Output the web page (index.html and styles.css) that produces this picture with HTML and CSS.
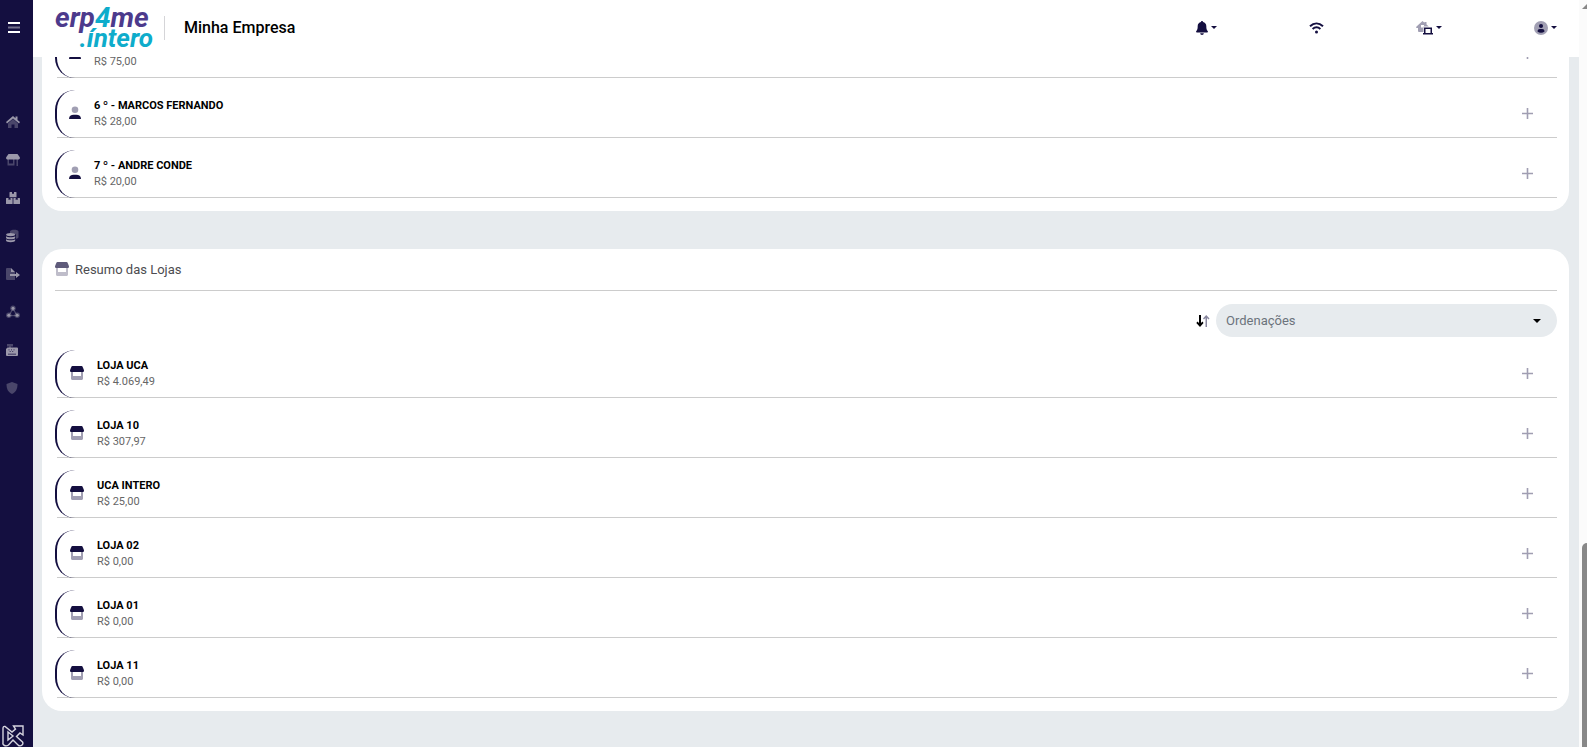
FILE: index.html
```
<!DOCTYPE html>
<html lang="pt-BR">
<head>
<meta charset="utf-8">
<title>Minha Empresa</title>
<link rel="stylesheet" href="styles.css">
</head>
<body>
<svg class="sprite" aria-hidden="true">
  <symbol id="user" viewBox="0 0 12 14"><circle class="soft" cx="6" cy="3.800" r="3.300"/><path d="M0 13c0-3 2-4.300 4.600-4.300h2.800C10 8.700 12 10 12 13z"/></symbol>
  <symbol id="store" viewBox="0 0 14 14"><path class="soft" d="M1 6h2v4h8V6h2v6.500c0 .8-.6 1.500-1.500 1.500h-9C1.600 14 1 13.400 1 12.500z"/><path d="M2.400 0h9.200c.4 0 .7.2.9.500l1.300 3.300c.5 1.300 0 2.200-1.300 2.200H1.500C.2 6-.3 5.100.2 3.800L1.500.5c.2-.3.500-.5.900-.5z"/></symbol>
  <symbol id="plus" viewBox="0 0 11 11"><path d="M4.700 0h1.600v4.700H11v1.600H6.300V11H4.700V6.300H0V4.700h4.700z"/></symbol>
  <symbol id="caret" viewBox="0 0 8 4"><path d="M0 0h8L4 4z"/></symbol>
</svg>

<aside class="sidebar">
  <button class="menu-toggle" aria-label="Menu"><svg viewBox="0 0 12 11"><path d="M0 0h12v2H0zM0 9h12v2H0z"/><path class="soft" d="M0 4.500h12v2H0z"/></svg></button>
  <nav class="side-nav">
    <a href="#" aria-label="Início"><svg viewBox="0 0 14 14"><path class="soft" d="M7 4l5 4.500V13H8.500V9.500h-3V13H2V8.500z"/><path d="M7 1l2.500 2.200V1.500h2v3.500L14 7l-1 1.500-6-5-6 5L0 7z"/></svg></a>
    <a href="#" aria-label="Lojas"><svg viewBox="0 0 14 14"><path class="soft" d="M1.500 6h1.500v4.500h4V6h1.500v6.500h-7zM10.500 6H12v7h-1.500z"/><path d="M2.500 1h9L14 4.500C14 6 13 6.500 12.300 6.500H1.700C.8 6.500 0 6 0 4.500z"/></svg></a>
    <a href="#" aria-label="Produtos"><svg viewBox="0 0 14 14"><path d="M4 1h2v2l1-.5L8 3V1h2q.5 0 .5.500v4.700h-7V1.500Q3.500 1 4 1zM.5 7h2v2l1-.5 1 .5V7H6q.6 0 .6.500v5q0 .5-.5.500H.5Q0 13 0 12.500v-5Q0 7 .5 7zM8 7h1.700v2l1-.5 1 .5V7h1.800q.5 0 .5.500v5q0 .5-.5.500H8q-.6 0-.6-.5v-5Q7.400 7 8 7z"/></svg></a>
    <a href="#" aria-label="Financeiro"><svg viewBox="0 0 14 14"><path class="soft" d="M4 2.500C4 .3 12.500.3 12.500 2.500V8c0 1-1 1.500-2.500 2V5.500L4 4z"/><ellipse cx="4.600" cy="5.600" rx="4.500" ry="1.700"/><path d="M0 7.200c2 1.300 7.200 1.300 9.200 0v1.500c0 2-9.200 2-9.200 0zM0 10.200c2 1.300 7.200 1.300 9.200 0v1.300c0 2.200-9.200 2.200-9.200 0z"/></svg></a>
    <a href="#" aria-label="Exportar"><svg viewBox="0 0 14 14"><path class="soft" d="M1 1h4v4h4v8H1q-1 0-1-1V2q0-1 1-1z"/><path d="M5 1l4 4H5zM4 7h6V5l4 3-4 3V9H4z"/></svg></a>
    <a href="#" aria-label="Rede"><svg viewBox="0 0 14 14"><path class="soft" d="M6.200 4L3 9l1 .8L7 5l3 4.800 1-.8-3.200-5z"/><path class="soft" d="M3 10h8v1.200H3z"/><circle class="soft" cx="7" cy="3.200" r="2.700"/><circle class="soft" cx="2.800" cy="10.300" r="2.700"/><circle class="soft" cx="11.200" cy="10.300" r="2.700"/><circle cx="7" cy="3.200" r="1.500"/><circle cx="2.800" cy="10.300" r="1.500"/><circle cx="11.200" cy="10.300" r="1.500"/></svg></a>
    <a href="#" aria-label="Caixa"><svg viewBox="0 0 14 14"><path class="soft" d="M1 1h6v2.500H5V5H3V3.500H1z"/><path d="M1.500 4.500h9.500q1 0 1 1v6.500q0 1-1 1H1q-1 0-1-1V6zM2.500 6.500v.8h1v-.8zm2.500 0v.8h1v-.8zm2.500 0v.8h1v-.8zM3.700 8.300v.8h1v-.8zm2.500 0v.8h1v-.8zM2 10.800v.7h8v-.7z" fill-rule="evenodd"/></svg></a>
    <a href="#" aria-label="Segurança"><svg viewBox="0 0 14 14"><path class="soft" d="M6 1l5.500 2c0 5-1.500 8-5.500 10C2 11 .5 8 .5 3z"/></svg></a>
  </nav>
  <svg class="brand-mark" viewBox="0 0 22 22"><path d="M1 3.500Q1 1 3 1.500L10 7l3.500-3L11.500 1H21v9l-3-2-3.500 3.500L20.500 17q1 1.500-.5 3t-3.500.5L11 15l-4.500 5q-2 1.500-4 .5T1 18zM6 7l5 4-5 4z"/></svg>
</aside>

<header class="topbar">
  <div class="logo" role="img" aria-label="erp4me .íntero"><span class="logo-top">erp<span class="logo-four">4</span>me</span><span class="logo-bottom">.íntero</span></div>
  <h1>Minha Empresa</h1>
  <div class="actions">
    <button aria-label="Notificações"><svg class="bell" viewBox="0 0 12 14"><path d="M6 0c.6 0 1 .4 1 1 2 .4 3.300 2 3.300 4 0 3 .4 3.900 1.500 5.200.4.700 0 1.300-.7 1.300H.9C.2 11.500-.2 10.900.2 10.200 1.300 8.900 1.700 8 1.700 5c0-2 1.300-3.600 3.300-4 0-.6.400-1 1-1zM4.200 12.300h3.600C7.800 13.400 7 14 6 14s-1.800-.6-1.800-1.700z"/></svg><svg class="caret"><use href="#caret"/></svg></button>
    <button aria-label="Conexão"><svg class="wifi" viewBox="0 0 15 12"><path class="line" d="M1 4.300c4-3.700 9-3.700 13 0M3.600 7c2.400-2.200 5.400-2.200 7.800 0"/><circle cx="7.500" cy="10" r="1.500"/></svg></button>
    <button aria-label="Estação"><svg class="station" viewBox="0 0 17 14"><path class="soft" d="M6.500 0l2 1.700V1h2v2.500l2.300 2H7.500V11H3q-1 0-1-1V7H.5Q-.3 6.300.5 5.500zM5 4v2.500h3V4z" fill-rule="evenodd"/><path d="M8 6.500h8V12h1v1.500H7V12h1zM9.500 8v4h5V8z" fill-rule="evenodd"/></svg><svg class="caret"><use href="#caret"/></svg></button>
    <button aria-label="Conta"><svg class="account" viewBox="0 0 14 14"><circle class="soft" cx="7" cy="7" r="7"/><circle cx="7" cy="5" r="2"/><path d="M3.500 10.500c0-1.700 1-2.500 2.400-2.500h2.200c1.400 0 2.400.8 2.400 2.500-2 1.700-5 1.700-7 0z"/></svg><svg class="caret"><use href="#caret"/></svg></button>
  </div>
</header>

<main>
  <section class="panel panel-sellers">
    <ul class="rows people">
      <li><div class="entry"><svg><use href="#user"/></svg><p><strong>5 º - VENDEDOR</strong><span>R$ 75,00</span></p><button aria-label="Expandir"><svg><use href="#plus"/></svg></button></div></li>
      <li><div class="entry"><svg><use href="#user"/></svg><p><strong>6 º - MARCOS FERNANDO</strong><span>R$ 28,00</span></p><button aria-label="Expandir"><svg><use href="#plus"/></svg></button></div></li>
      <li><div class="entry"><svg><use href="#user"/></svg><p><strong>7 º - ANDRE CONDE</strong><span>R$ 20,00</span></p><button aria-label="Expandir"><svg><use href="#plus"/></svg></button></div></li>
    </ul>
  </section>

  <section class="panel">
    <h2><svg><use href="#store"/></svg>Resumo das Lojas</h2>
    <div class="sorting">
      <label for="order" aria-label="Ordenações"><svg viewBox="0 0 14 12"><path d="M3 0h2v8l1.500-1.500L7.500 8 4 12 .3 8l1.200-1.500L3 8z"/><path class="soft" d="M9.500 12V3L8 4.500 7 3.500 10.200 0 13.500 3.500l-1 1L11 3v9z"/></svg></label>
      <div class="select"><select id="order"><option>Ordenações</option></select><svg class="caret"><use href="#caret"/></svg></div>
    </div>
    <ul class="rows">
      <li><div class="entry"><svg><use href="#store"/></svg><p><strong>LOJA UCA</strong><span>R$ 4.069,49</span></p><button aria-label="Expandir"><svg><use href="#plus"/></svg></button></div></li>
      <li><div class="entry"><svg><use href="#store"/></svg><p><strong>LOJA 10</strong><span>R$ 307,97</span></p><button aria-label="Expandir"><svg><use href="#plus"/></svg></button></div></li>
      <li><div class="entry"><svg><use href="#store"/></svg><p><strong>UCA INTERO</strong><span>R$ 25,00</span></p><button aria-label="Expandir"><svg><use href="#plus"/></svg></button></div></li>
      <li><div class="entry"><svg><use href="#store"/></svg><p><strong>LOJA 02</strong><span>R$ 0,00</span></p><button aria-label="Expandir"><svg><use href="#plus"/></svg></button></div></li>
      <li><div class="entry"><svg><use href="#store"/></svg><p><strong>LOJA 01</strong><span>R$ 0,00</span></p><button aria-label="Expandir"><svg><use href="#plus"/></svg></button></div></li>
      <li><div class="entry"><svg><use href="#store"/></svg><p><strong>LOJA 11</strong><span>R$ 0,00</span></p><button aria-label="Expandir"><svg><use href="#plus"/></svg></button></div></li>
    </ul>
  </section>
</main>

<div class="scroll-track" aria-hidden="true"><svg viewBox="0 0 5 5"><path d="M5 0v5H0z"/></svg><div class="scroll-thumb"></div></div>
</body>
</html>
```

FILE: styles.css
```
* { box-sizing: border-box; }
:root { --navy: #140f40; --line: #ccc; --bg: #e7ebee; }
body {
  margin: 0;
  display: grid;
  grid-template-columns: 33px 1fr 8px;
  height: 100vh;
  overflow: hidden;
  background: var(--bg);
  font-family: Roboto, "Open Sans", sans-serif;
  color: #000;
}
svg { display: block; fill: currentColor; flex: none; }
.soft { opacity: .4; }
.sprite { position: absolute; width: 0; height: 0; }
button { padding: 0; border: 0; background: none; color: inherit; font: inherit; cursor: pointer; }
h1, h2, p, ul { margin: 0; padding: 0; }

.sidebar {
  grid-column: 1;
  grid-row: 1;
  display: flex;
  flex-direction: column;
  background: var(--navy);
  color: #fff;
  padding: 22px 0 0 6px;
}
.menu-toggle { align-self: flex-start; padding-left: 2px; }
.menu-toggle svg { width: 12px; height: 11px; }
.side-nav { display: grid; gap: 24px; margin-top: 82px; color: #9b98aa; }
.side-nav a { color: inherit; width: 14px; }
.side-nav svg { width: 14px; height: 14px; }
.brand-mark {
  width: 22px;
  height: 22px;
  margin: auto 0 0 -4px;
  fill: none;
  stroke: #d5d4de;
  stroke-width: 1.4;
}

.topbar {
  grid-column: 2;
  grid-row: 1;
  align-self: start;
  z-index: 2;
  height: 57px;
  display: flex;
  align-items: center;
  padding: 0 22px 2px;
  background: #fff;
}
.logo {
  display: grid;
  width: 98px;
  font: italic 700 28px/21px Roboto, sans-serif;
  color: #4c3a8c;
}
.logo-top { white-space: nowrap; }
.logo-four { color: #0eaccb; }
.logo-bottom { justify-self: end; color: #0eaccb; font-size: 26px; }
h1 {
  margin-left: 11px;
  padding-left: 19px;
  border-left: 1px solid #d5d5d8;
  font-size: 16px;
  font-weight: 500;
  line-height: 24px;
}
.actions { display: flex; gap: 92px; margin-left: auto; color: var(--navy); }
.actions button { display: flex; align-items: center; gap: 3px; }
.caret { width: 6px; height: 3px; }
.bell { width: 12px; height: 14px; }
.wifi { width: 15px; height: 12px; }
.line { fill: none; stroke: currentColor; stroke-width: 2; }
.station { width: 17px; height: 14px; }
.account { width: 14px; height: 14px; }

main { grid-column: 2; grid-row: 1; padding: 0 10px 0 9px; }
.panel { padding: 13px 12px 13px 13px; border-radius: 20px; background: #fff; }
.panel-sellers { padding-top: 30px; margin-bottom: 38px; }
h2 {
  display: flex;
  align-items: flex-start;
  gap: 6px;
  height: 29px;
  border-bottom: 1px solid var(--line);
  font-size: 13px;
  font-weight: 400;
  line-height: 15px;
  color: #4c4c50;
}
h2 svg { width: 14px; height: 14px; color: #5e5a7a; }
.sorting { display: flex; justify-content: flex-end; align-items: center; gap: 6px; margin: 13px 0; }
.sorting label svg { width: 14px; height: 12px; color: #000; }
.sorting .soft { color: var(--navy); opacity: .5; }
.select { position: relative; width: 341px; }
.select select {
  display: block;
  appearance: none;
  width: 100%;
  height: 33px;
  padding: 0 10px;
  border: 0;
  border-radius: 17px;
  background: var(--bg);
  color: #6c737c;
  font: 13px Roboto, sans-serif;
}
.select .caret { position: absolute; right: 16px; top: 15px; width: 8px; height: 4px; pointer-events: none; }

.rows { display: grid; gap: 12px; list-style: none; }
.rows li { height: 48px; margin-left: 2px; border-bottom: 1px solid var(--line); }
.entry {
  display: flex;
  align-items: center;
  height: 48px;
  margin-left: -2px;
  padding: 0 24px 2px 13px;
  border-left: 2px solid var(--navy);
  border-radius: 20px 0 0 20px;
  color: var(--navy);
}
.people .entry { padding-left: 12px; }
.entry > svg { width: 14px; height: 14px; }
.people .entry > svg { width: 12px; }
.entry p { display: grid; margin: 0 auto 0 13px; padding-top: 2px; font-size: 11px; line-height: 16px; }
.entry strong { color: #000; font-weight: 700; }
.entry span { color: #666; }
.entry button svg { width: 11px; height: 11px; opacity: .4; }

.scroll-track { grid-column: 3; grid-row: 1; display: flex; flex-direction: column; align-items: flex-end; background: #fbfbfb; color: #888; }
.scroll-track svg { width: 5px; height: 5px; margin-top: 4px; }
.scroll-thumb { width: 5px; height: 27.3%; margin-top: auto; border-radius: 5px 0 0 0; background: #888; }
```
